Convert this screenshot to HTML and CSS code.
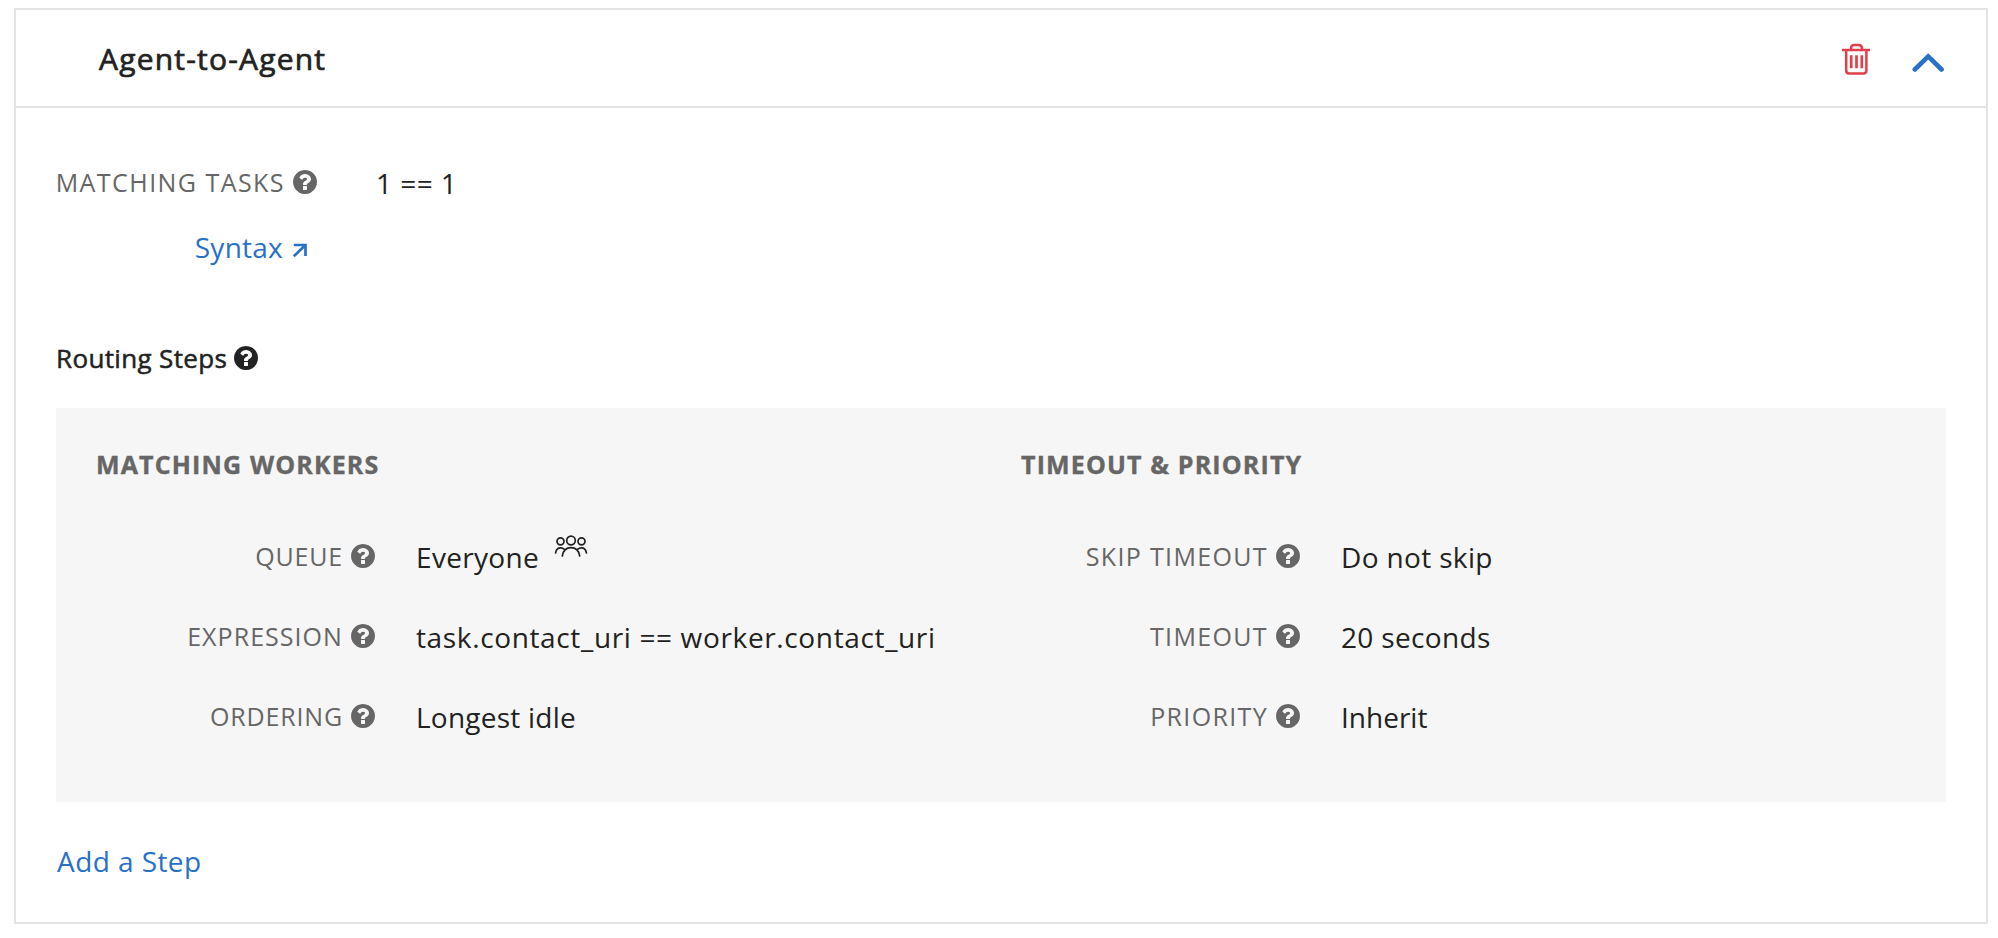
FILE: index.html
```html
<!DOCTYPE html>
<html lang="en">
<head>
<meta charset="utf-8">
<title>Workflow</title>
<link rel="stylesheet" href="styles.css">
</head>
<body>
<svg class="sprite" aria-hidden="true">
  <symbol id="help" viewBox="0 64 1536 1536"><path d="M896 1312v-192q0-14-9-23t-23-9h-192q-14 0-23 9t-9 23v192q0 14 9 23t23 9h192q14 0 23-9t9-23zm256-672q0-88-55.500-163t-138.500-116-170-41q-243 0-371 213-15 24 8 42l132 100q7 6 19 6 16 0 25-12 53-68 86-92 34-24 86-24 48 0 85.500 26t37.500 59q0 38-20 61t-68 45q-63 28-115.500 86.500t-52.500 125.500v36q0 14 9 23t23 9h192q14 0 23-9t9-23q0-19 21.500-49.500t54.500-49.500q32-18 49-28.500t46-35 44.500-48 28-60.500 12.500-81zm384 192q0 209-103 385.500t-279.500 279.500-385.500 103-385.500-103-279.500-279.500-103-385.500 103-385.500 279.500-279.500 385.500-103 385.500 103 279.500 279.500 103 385.500z"/></symbol>
</svg>
<section class="card">
  <header class="card-header">
    <h1 class="title">Agent-to-Agent</h1>
    <div class="actions">
      <svg class="trash" viewBox="0 0 30 34"><path d="M1 9h28M10 9V7.500Q10 4 13 4h4.500Q21 4 21 7.500V9M5.200 9v20.500Q5.200 32.400 8 32.400h14.500Q25.400 32.400 25.400 29.500V9" stroke-width="2.500"/><path d="M10.200 14.300v13M15.500 14.300v13M20.800 14.300v13" stroke-width="2.700"/></svg>
      <svg class="chevron" viewBox="0 0 32 20"><path d="M2.800 16.500 16.200 3.400 29.600 16.500"/></svg>
    </div>
  </header>
  <div class="card-body">
    <div class="row">
      <div class="label label-tasks"><span class="t-tasks">MATCHING TASKS</span><svg class="help"><use href="#help"/></svg></div>
      <div class="value v-rule">1 == 1</div>
    </div>
    <div class="syntax"><a class="link">Syntax</a><svg class="external" viewBox="0 0 16 16"><path d="M1.800 3H13.500V14M13.300 3.200 1.800 14.200"/></svg></div>
    <h2 class="section-title"><span>Routing Steps</span><svg class="help"><use href="#help"/></svg></h2>
    <div class="panel">
      <div class="column">
        <h3 class="panel-title">MATCHING WORKERS</h3>
        <div class="row">
          <div class="label"><span class="t-queue">QUEUE</span><svg class="help"><use href="#help"/></svg></div>
          <div class="value v-queue">Everyone</div>
          <svg class="users" viewBox="0 0 34 24"><circle cx="6.500" cy="7.300" r="3.500"/><circle cx="27.500" cy="7.300" r="3.500"/><circle cx="17" cy="6.500" r="4.300"/><path d="M1.600 19Q2.300 13.800 6.700 13.800 8.900 13.800 10.400 15.300M32.400 19Q31.700 13.800 27.300 13.800 25.100 13.800 23.600 15.300M8.300 22Q9.700 13.700 17 13.700T25.700 22"/></svg>
        </div>
        <div class="row">
          <div class="label"><span class="t-expression">EXPRESSION</span><svg class="help"><use href="#help"/></svg></div>
          <div class="value v-expression">task.contact_uri == worker.contact_uri</div>
        </div>
        <div class="row">
          <div class="label"><span class="t-ordering">ORDERING</span><svg class="help"><use href="#help"/></svg></div>
          <div class="value v-ordering">Longest idle</div>
        </div>
      </div>
      <div class="column">
        <h3 class="panel-title">TIMEOUT &amp; PRIORITY</h3>
        <div class="row">
          <div class="label"><span>SKIP TIMEOUT</span><svg class="help"><use href="#help"/></svg></div>
          <div class="value v-timeout">Do not skip</div>
        </div>
        <div class="row">
          <div class="label"><span>TIMEOUT</span><svg class="help"><use href="#help"/></svg></div>
          <div class="value v-timeout">20 seconds</div>
        </div>
        <div class="row">
          <div class="label"><span>PRIORITY</span><svg class="help"><use href="#help"/></svg></div>
          <div class="value">Inherit</div>
        </div>
      </div>
    </div>
    <div class="footer"><a class="link add">Add a Step</a></div>
  </div>
</section>
</body>
</html>
```
FILE: styles.css
```css
* { box-sizing: border-box; }

body {
  margin: 0;
  padding: 8px 10px 14px 14px;
  height: 938px;
  background: #fff;
  color: #222;
  font-family: "Open Sans", "Noto Sans", sans-serif;
  font-size: 28px;
  line-height: 40px;
}

h1, h2, h3 { margin: 0; }
svg { flex: none; }
.sprite { display: none; }

.card { height: 916px; border: 2px solid #e4e4e4; }

.card-header {
  display: flex;
  align-items: center;
  justify-content: space-between;
  height: 98px;
  padding: 0 42px 0 83px;
  border-bottom: 2px solid #e4e4e4;
}

.title {
  padding-top: 1px;
  font-size: 30px;
  font-weight: 500;
  letter-spacing: 1.2px;
  -webkit-text-stroke: 0.7px currentColor;
}

.actions { display: flex; align-items: center; gap: 41px; }
.trash { width: 30px; height: 34px; fill: none; stroke: #e0404a; }
.chevron {
  width: 32px;
  height: 20px;
  margin-top: 9px;
  fill: none;
  stroke: #2870c8;
  stroke-width: 4.6;
  stroke-linecap: round;
}

.card-body { padding: 34px 40px 0; }

.row { display: flex; align-items: center; height: 80px; white-space: nowrap; }

.label {
  display: flex;
  align-items: center;
  justify-content: flex-end;
  gap: 8px;
  width: 279px;
  margin-right: 41px;
  color: #666;
  font-size: 25px;
  letter-spacing: 1.35px;
}
.label-tasks { width: 261px; margin-right: 59px; }
.help { width: 24px; height: 24px; fill: currentColor; }

.value { padding-top: 2px; }

.t-tasks { letter-spacing: 1.45px; }
.t-queue { letter-spacing: 0.8px; }
.t-expression { letter-spacing: 1.05px; }
.t-ordering { letter-spacing: 0.84px; }
.v-rule { letter-spacing: 0.45px; }
.v-queue { letter-spacing: 0.32px; }
.v-expression { letter-spacing: 0.64px; }
.v-ordering { letter-spacing: 0.23px; }
.v-timeout { letter-spacing: 0.35px; }

.syntax {
  display: flex;
  align-items: center;
  justify-content: flex-end;
  gap: 9px;
  width: 252px;
  height: 50px;
  letter-spacing: 0.25px;
}
.link { color: #2870c8; }
.external {
  width: 16px;
  height: 16px;
  margin-top: 6px;
  fill: none;
  stroke: #2870c8;
  stroke-width: 2.7;
}

.section-title {
  display: flex;
  align-items: center;
  gap: 7px;
  height: 80px;
  margin: 46px 0 10px;
  font-size: 26px;
  font-weight: 500;
  letter-spacing: 0.35px;
}
.section-title span { -webkit-text-stroke: 0.5px currentColor; }

.panel {
  display: grid;
  grid-template-columns: 925px 1fr;
  height: 394px;
  padding-left: 40px;
  background: #f6f6f6;
}

.panel-title {
  height: 108px;
  padding-top: 4px;
  color: #666;
  font-size: 25px;
  font-weight: 700;
  line-height: 104px;
  letter-spacing: 1.15px;
  -webkit-text-stroke: 0.4px currentColor;
}

.users {
  width: 34px;
  height: 24px;
  margin: -20px 0 0 15px;
  fill: none;
  stroke: #222;
  stroke-width: 1.7;
  stroke-linecap: round;
}

.footer { display: flex; align-items: center; height: 80px; margin-top: 19px; }
.add { padding-left: 1px; letter-spacing: 0.43px; }
```
